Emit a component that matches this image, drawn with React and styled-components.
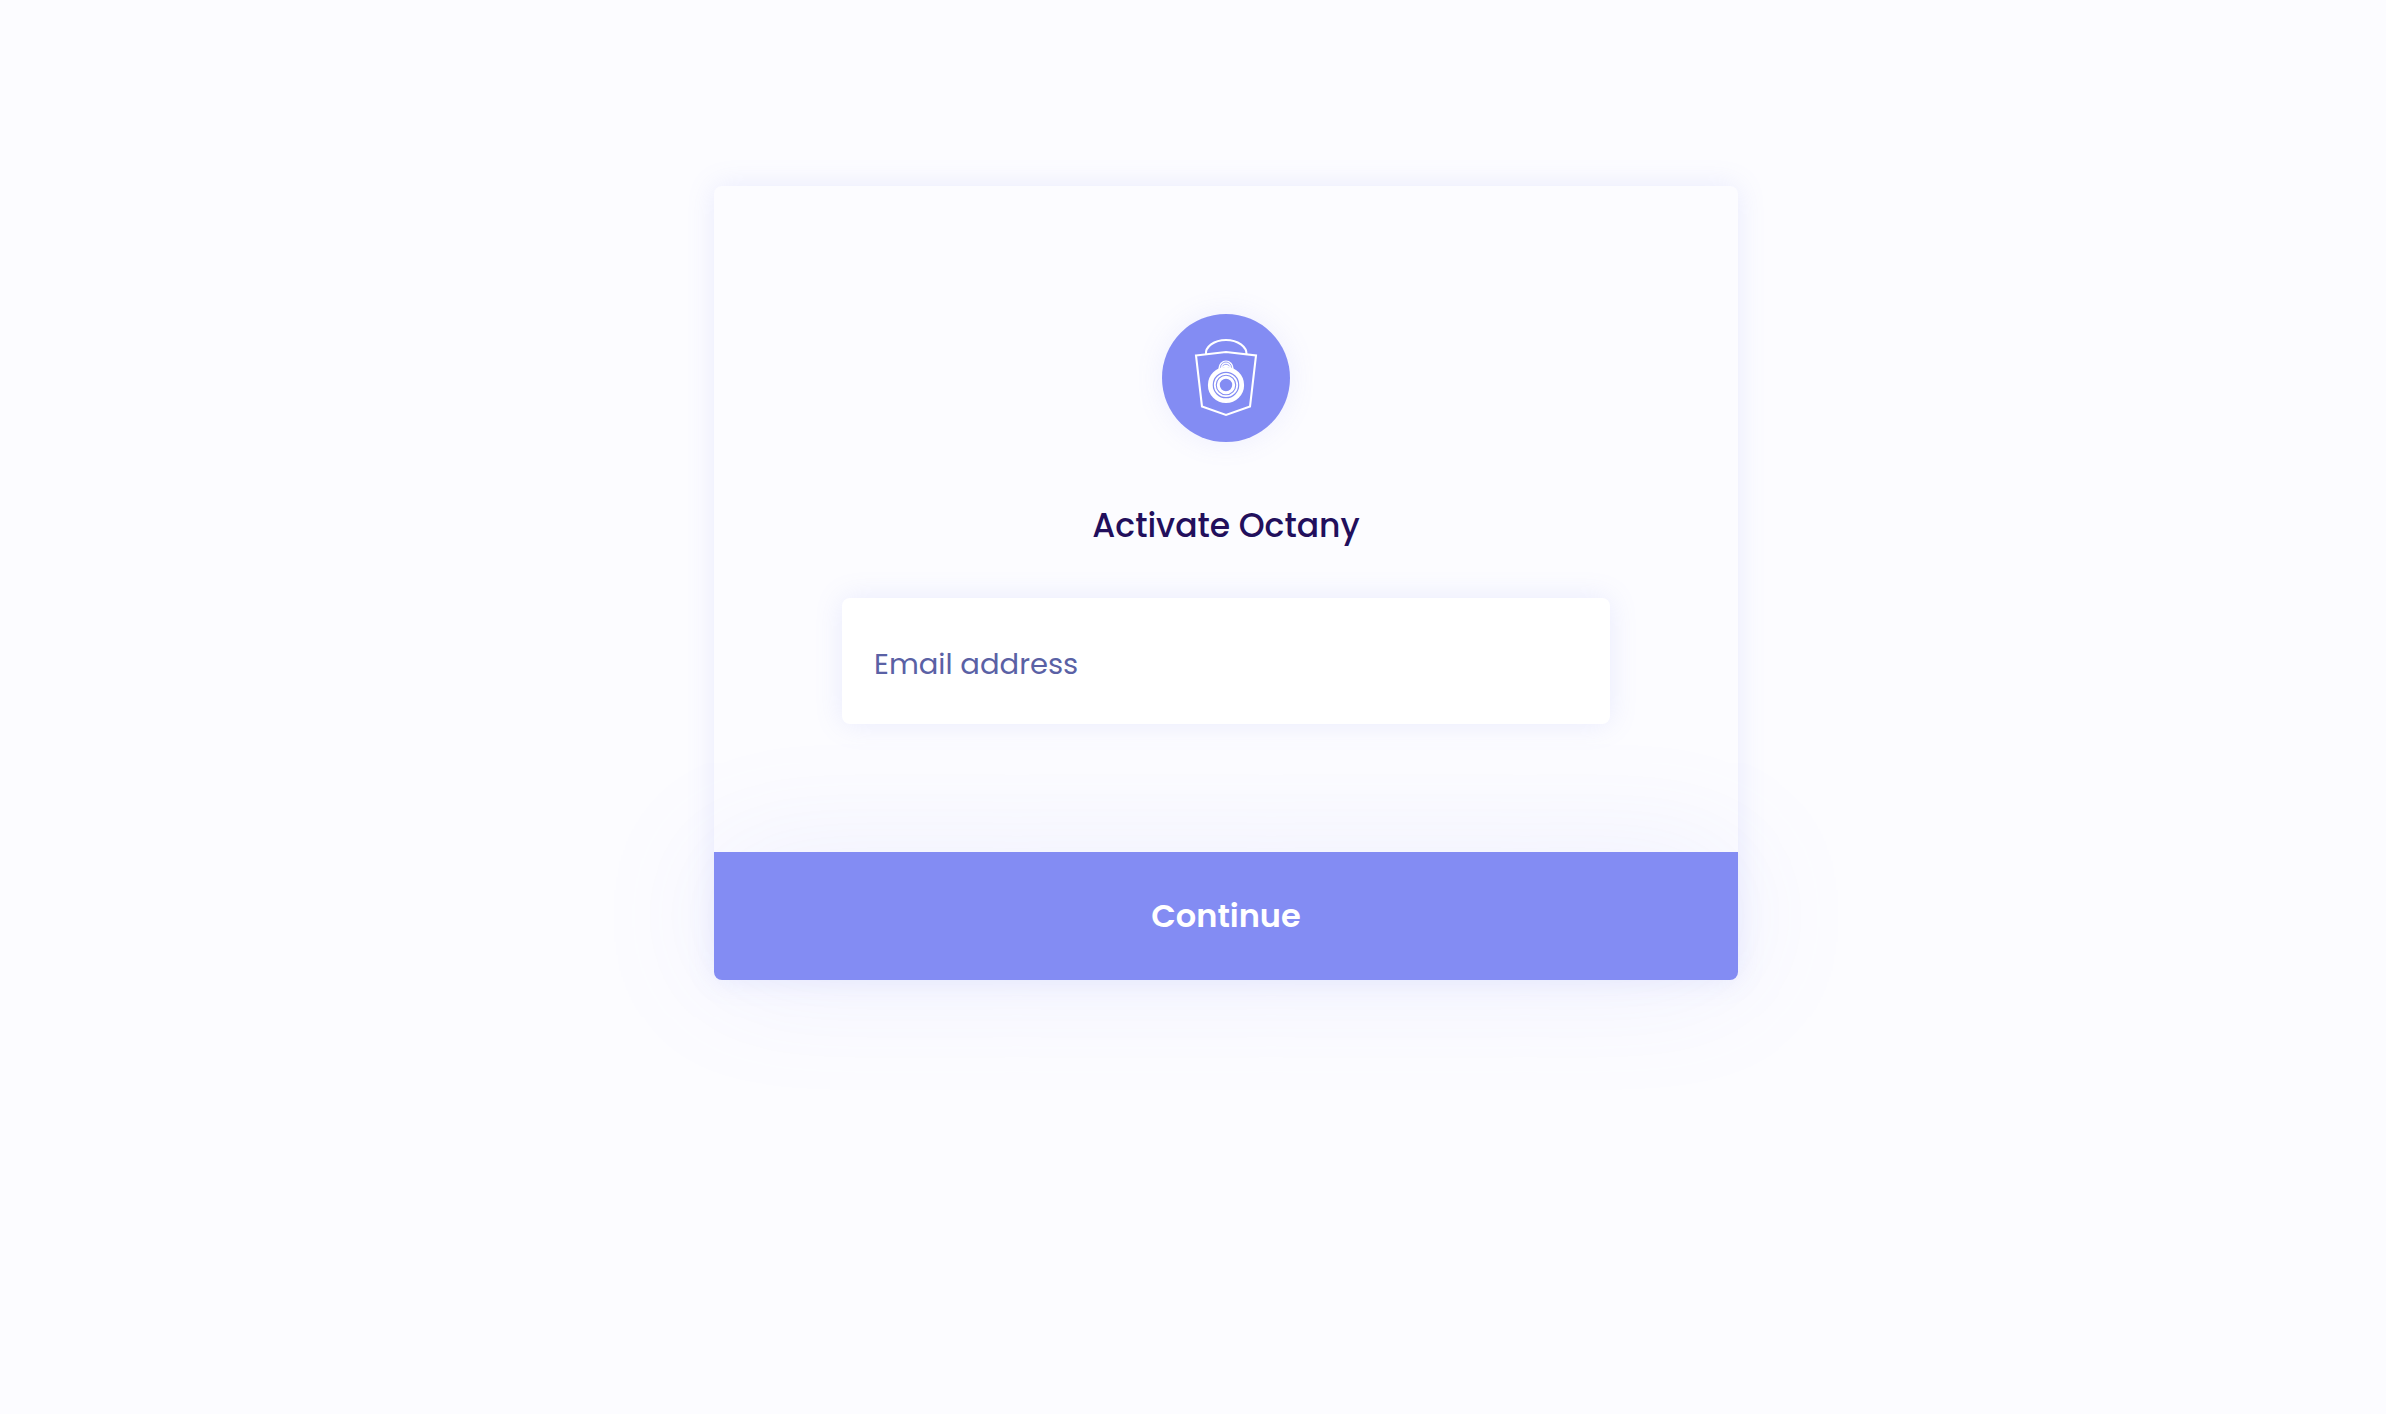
import React from "react";
import styled, { createGlobalStyle } from "styled-components";

const GlobalStyle = createGlobalStyle`
  *, *::before, *::after { box-sizing: border-box; }
  body {
    margin: 0;
    background: #fcfcff;
    color: #220f5c;
    font-family: Poppins, Inter, "Liberation Sans", sans-serif;
  }
`;

const Page = styled.main`
  display: flex;
  justify-content: center;
  align-items: flex-start;
  min-height: 100vh;
  padding: 186px 0 64px 66px;
`;

const Card = styled.form`
  width: 100%;
  max-width: 1024px;
  border-radius: 8px;
  background: #fcfcff;
  box-shadow: 0 0 28px rgba(132, 140, 243, 0.16);
`;

const Body = styled.div`
  display: flex;
  flex-direction: column;
  align-items: center;
  padding: 128px;
`;

const Badge = styled.div`
  display: flex;
  align-items: center;
  justify-content: center;
  width: 128px;
  height: 128px;
  border-radius: 50%;
  background: #838cf3;
  box-shadow: 0 0 28px rgba(132, 140, 243, 0.12);
`;

const Title = styled.h1`
  margin: 60px 0 48px;
  font-size: 33px;
  line-height: 48px;
  font-weight: 500;
`;

const EmailInput = styled.input`
  width: 100%;
  height: 126px;
  padding: 6px 32px 0;
  border: 0;
  border-radius: 8px;
  background: #fff;
  box-shadow: 0 0 28px rgba(132, 140, 243, 0.16);
  color: #220f5c;
  font: inherit;
  font-size: 29px;

  &::placeholder {
    color: #5a61a5;
    opacity: 1;
  }
`;

const SubmitButton = styled.button`
  display: block;
  width: 100%;
  height: 128px;
  border: 0;
  border-radius: 0 0 8px 8px;
  background: #838cf3;
  box-shadow: 0 0 128px rgba(132, 140, 243, 0.11);
  color: #fff;
  font: inherit;
  font-size: 32px;
  font-weight: 600;
  cursor: pointer;
`;

function Logo() {
  return (
    <svg width="128" height="128" viewBox="0 0 128 128" fill="none" stroke="#fff" strokeWidth="2.1" aria-hidden="true">
      <path d="M44 40.5C43 33 52 26 64 26S85 33 84.500 40.500" />
      <path d="M34 41.500L64 38L94 41.500L88 92.500L64 101L40 92.500Z" />
      <path d="M56.500 58V54A7.500 7.500 0 0 1 71.500 54V58Z" fill="#fff" stroke="none" />
      <g stroke="#838cf3" strokeWidth="0.8">
        <path d="M58.500 55V53.500A5.500 5.500 0 0 1 69.500 53.500V55" />
        <path d="M60.500 52Q64 48.500 67.500 52" />
        <path d="M61 53.500H67" />
      </g>
      <circle cx="64" cy="71" r="17.500" fill="#838cf3" stroke="none" />
      <circle cx="64" cy="71" r="15.700" strokeWidth="4.800" />
      <circle cx="64" cy="71" r="11.200" strokeWidth="1.800" />
      <circle cx="64" cy="71" r="7.700" strokeWidth="3" />
    </svg>
  );
}

export default function App() {
  return (
    <>
      <GlobalStyle />
      <Page>
        <Card onSubmit={(event) => event.preventDefault()}>
          <Body>
            <Badge>
              <Logo />
            </Badge>
            <Title>Activate Octany</Title>
            <EmailInput type="email" name="email" placeholder="Email address" aria-label="Email address" />
          </Body>
          <SubmitButton type="submit">Continue</SubmitButton>
        </Card>
      </Page>
    </>
  );
}
